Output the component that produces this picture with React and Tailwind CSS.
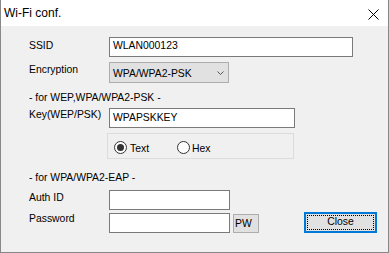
export default function App() {
  return (
    <div className="w-[389px] h-[253px] bg-[#f0f0f0] border-x border-b border-[#888888] font-['Liberation_Sans',Arial,sans-serif] text-black flex flex-col overflow-hidden">
      <div className="h-[26px] bg-white flex items-start justify-between shrink-0">
        <span className="pl-[3px] pt-[6px] text-[12px] leading-[15px]">Wi-Fi conf.</span>
        <svg className="mt-[9px] mr-[9px]" width="11" height="11" viewBox="0 0 11 11">
          <path d="M0.5 0.5 L10.5 10.5 M10.5 0.5 L0.5 10.5" stroke="#000" strokeWidth="1" fill="none" />
        </svg>
      </div>
      <div className="flex-1 pl-[28px] pr-[11px] text-[10.4px] leading-[13px]">
        {/* SSID */}
        <div className="mt-[11px] flex h-[20px] items-start">
          <span className="w-[80px] pt-[2px]">SSID</span>
          <div className="w-[244px] h-[20px] border border-[#7a7a7a] bg-white pl-[3px] pt-[1px]">WLAN000123</div>
        </div>
        {/* Encryption */}
        <div className="mt-[5px] flex h-[21px] items-start">
          <span className="w-[80px] pt-[0.5px]">Encryption</span>
          <div className="w-[120px] h-[21px] border border-[#adadad] bg-[#e1e1e1] pl-[3px] pr-[4px] flex items-start justify-between">
            <span className="pt-[4px]">WPA/WPA2-PSK</span>
            <svg className="mt-[8px]" width="7" height="4" viewBox="0 0 7 4">
              <path d="M0.5 0.5 L3.5 3.5 L6.5 0.5" stroke="#555" strokeWidth="1" fill="none" />
            </svg>
          </div>
        </div>
        {/* section */}
        <div className="h-[25px] pt-[8px]">- for WEP,WPA/WPA2-PSK -</div>
        {/* Key */}
        <div className="flex h-[20px] items-start">
          <span className="w-[80px]">Key(WEP/PSK)</span>
          <div className="w-[186px] h-[20px] border border-[#7a7a7a] bg-white pl-[3px] pt-[1.5px]">WPAPSKKEY</div>
        </div>
        {/* Radio group */}
        <div className="mt-[5px] ml-[78px] w-[187px] h-[26px] border border-[#dcdcdc] flex items-start pl-[6px]">
          <div className="w-[63px] flex items-start">
            <span className="mt-[7px] w-[13px] h-[13px] rounded-full border border-[#333333] bg-white flex items-center justify-center">
              <span className="w-[7px] h-[7px] rounded-full bg-[#333333]" />
            </span>
            <span className="ml-[3px] mt-[7.5px]">Text</span>
          </div>
          <div className="flex items-start">
            <span className="mt-[7px] w-[13px] h-[13px] rounded-full border border-[#333333] bg-white" />
            <span className="ml-[2px] mt-[7.5px]">Hex</span>
          </div>
        </div>
        {/* EAP section */}
        <div className="pt-[12px]">- for WPA/WPA2-EAP -</div>
        {/* Auth ID */}
        <div className="mt-[6px] flex h-[20px] items-start">
          <span className="w-[80px] pt-[1px]">Auth ID</span>
          <div className="w-[121px] h-[20px] border border-[#7a7a7a] bg-white" />
        </div>
        {/* Password */}
        <div className="mt-[3px] flex h-[20px] items-start">
          <span className="w-[80px] -mt-[1px]">Password</span>
          <div className="w-[121px] h-[20px] border border-[#7a7a7a] bg-white" />
          <div className="ml-[3px] mt-[1px] w-[26px] h-[19px] border border-[#adadad] bg-[#e1e1e1] pl-[1px] pt-[1.5px]">PW</div>
          <div className="ml-auto -mt-[1px] relative w-[73px] h-[21px] border-2 border-[#0078d7] bg-[#e1e1e1] flex justify-center pt-[1px]">
            <span className="absolute inset-[1px] border border-dotted border-black" />
            <span>Close</span>
          </div>
        </div>
      </div>
    </div>
  );
}
